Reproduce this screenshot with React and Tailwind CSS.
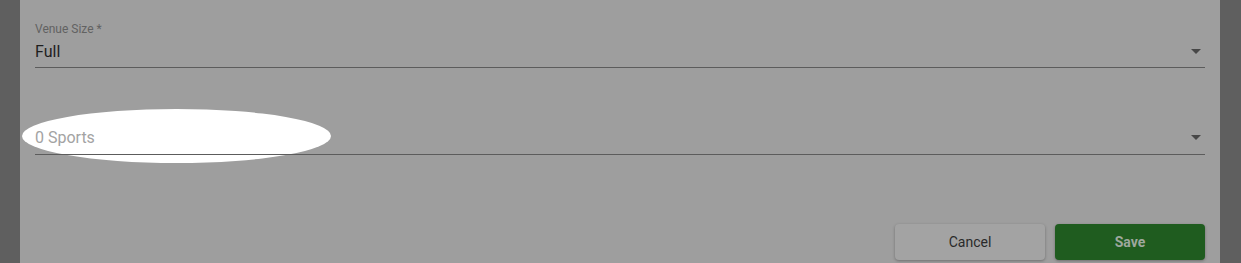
import React from "react";

// Dimmed edit-venue dialog: two select fields and the action row

const DropArrow = () => (
  <svg viewBox="0 0 10 5" className="w-[10px] h-[5px] fill-[#474747]">
    <path d="M0 0l5 5 5-5z" />
  </svg>
);

const SelectField = ({ label, value, placeholder }) => (
  <div className="relative z-10 flex flex-col">
    {label && (
      <span className="text-[12px] leading-[14px] text-[#626262]">{label}</span>
    )}
    <div
      className={`flex items-center justify-between border-b border-[#5c5c5c] pr-[4px] ${
        label ? "mt-[6px] pb-[6px]" : "pb-[7px]"
      }`}
    >
      <span
        className={`text-[16px] leading-[19px] ${
          placeholder ? "text-[#a3a3a3]" : "text-[#1e1e1e]"
        }`}
      >
        {value}
      </span>
      <DropArrow />
    </div>
  </div>
);

const App = () => {
  return (
    <div
      className="w-[1241px] h-[263px] overflow-hidden flex bg-[#5f5f5f]"
      style={{ fontFamily: "Roboto, 'Liberation Sans', sans-serif" }}
    >
      <div className="w-[20px] shrink-0" />

      {/* Dialog body */}
      <div className="relative w-[1200px] shrink-0 bg-[#9e9e9e] px-[15px] pt-[22px]">
        {/* white highlight ellipse over the sports field */}
        <div className="absolute left-[2px] top-[109px] w-[309px] h-[54px] rounded-[50%] bg-white" />

        <SelectField label="Venue Size *" value="Full" />

        <div className="mt-[60px]">
          <SelectField value="0 Sports" placeholder />
        </div>

        <div className="mt-[69px] flex justify-end gap-[10px]">
          <button className="w-[150px] h-[36px] rounded-[4px] bg-[#a3a3a3] shadow-[0_1px_3px_rgba(0,0,0,0.3)] text-[14px] text-[#2a2a2a]">
            Cancel
          </button>
          <button className="w-[150px] h-[36px] rounded-[4px] bg-[#1f5c1f] shadow-[0_1px_3px_rgba(0,0,0,0.3)] text-[14px] font-bold text-[#9ea89e]">
            Save
          </button>
        </div>
      </div>

      <div className="flex-1" />
    </div>
  );
};

export default App;
